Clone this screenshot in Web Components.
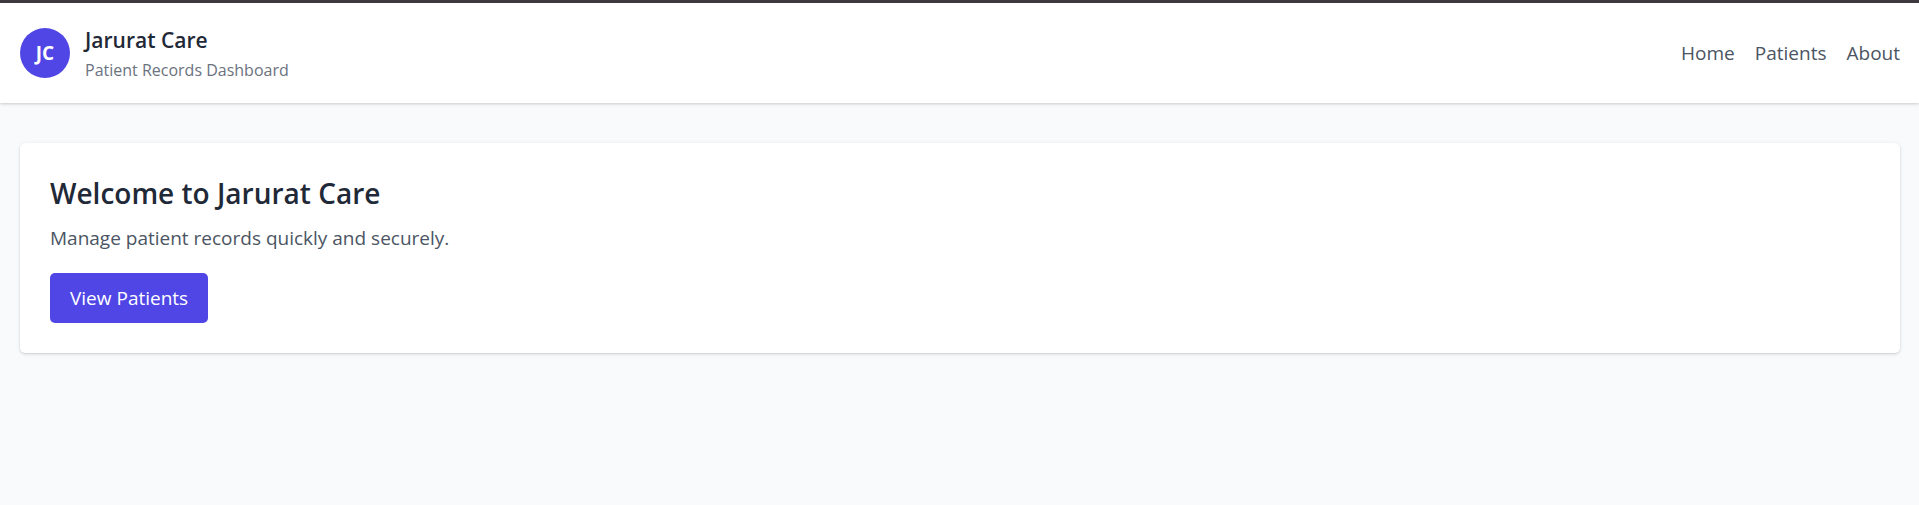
<!DOCTYPE html>
<html lang="en">
<head>
<meta charset="utf-8">
<meta name="viewport" content="width=device-width, initial-scale=1">
<title>Jarurat Care</title>
<style>
body { margin: 0; min-height: 100vh; background: #f9fafb; color: #1f2937; border-top: 3px solid #3c3a3c; box-sizing: border-box; font: 19px/30px "Segoe UI", "Open Sans", "Noto Sans", sans-serif; }
main { padding: 40px 19px 40px 20px; }
</style>
</head>
<body>
<site-header>
  <site-brand slot="brand" initials="JC"><span slot="name">Jarurat Care</span><span slot="tagline">Patient Records Dashboard</span></site-brand>
  <nav-link href="#home">Home</nav-link>
  <nav-link href="#patients">Patients</nav-link>
  <nav-link href="#about">About</nav-link>
</site-header>
<main>
  <welcome-card>
    <span slot="title">Welcome to Jarurat Care</span>
    Manage patient records quickly and securely.
    <action-button slot="action">View Patients</action-button>
  </welcome-card>
</main>
<script>
const define = (name, html, setup) => customElements.define(name, class extends HTMLElement {
  constructor() {
    super();
    this.attachShadow({ mode: "open" }).innerHTML = html;
  }
  connectedCallback() { if (setup) setup(this, this.shadowRoot); }
});

define("site-header", `
  <style>
    :host { display: block; position: relative; background: #fff; box-shadow: 0 1px 4px rgba(0,0,0,.1), 0 1px 2px rgba(0,0,0,.1); }
    header { display: flex; align-items: center; justify-content: space-between; padding: 20px 19px 20px 20px; }
    nav { display: flex; gap: 20px; }
  </style>
  <header><slot name="brand"></slot><nav><slot></slot></nav></header>`);

define("site-brand", `
  <style>
    :host { display: flex; align-items: center; gap: 15px; }
    .logo { display: flex; align-items: center; justify-content: center; width: 50px; height: 50px; border-radius: 50%; background: #4f46e5; color: #fff; font-weight: 700; }
    h1, p { margin: 0; }
    h1 { font-size: 21px; line-height: 35px; font-weight: 600; }
    p { font-size: 16px; line-height: 25px; color: #6b7280; }
  </style>
  <div class="logo"></div>
  <div><h1><slot name="name"></slot></h1><p><slot name="tagline"></slot></p></div>`,
  (el, root) => { root.querySelector(".logo").textContent = el.getAttribute("initials"); });

define("nav-link", `
  <style>
    :host { display: block; }
    a { color: #4b5563; text-decoration: none; }
    a:hover { color: #4f46e5; }
  </style>
  <a><slot></slot></a>`,
  (el, root) => { root.querySelector("a").href = el.getAttribute("href"); });

define("welcome-card", `
  <style>
    :host { display: block; padding: 30px; border-radius: 5px; background: #fff; box-shadow: 0 1px 4px rgba(0,0,0,.1), 0 1px 2px rgba(0,0,0,.1); }
    h2 { margin: 0 0 10px; font-size: 28px; line-height: 40px; font-weight: 600; }
    p { margin: 0 0 20px; color: #4b5563; }
  </style>
  <h2><slot name="title"></slot></h2><p><slot></slot></p><slot name="action"></slot>`);

define("action-button", `
  <style>
    :host { display: flex; }
    button { padding: 10px 20px; border: 0; border-radius: 5px; background: #4f46e5; color: #fff; font: inherit; cursor: pointer; }
    button:hover { background: #4338ca; }
  </style>
  <button type="button"><slot></slot></button>`);
</script>
</body>
</html>
